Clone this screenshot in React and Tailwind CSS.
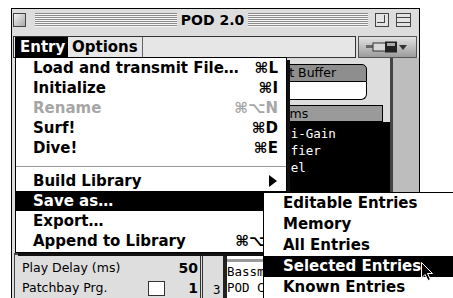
function MenuRow({ label, keys, disabled, active, arrow }) {
  return (
    <div
      className={`flex h-5 items-center pl-[17px] pr-[8px] ${
        active ? 'bg-black text-white' : disabled ? 'text-[#a6a6a6]' : 'text-black'
      }`}
    >
      <span className="flex-1 whitespace-nowrap">{label}</span>
      {keys && <span className="whitespace-nowrap">{keys}</span>}
      {arrow && (
        <svg width="8" height="12" viewBox="0 0 8 12" className="mr-[1px]">
          <polygon points="0,0 8,6 0,12" fill="black" />
        </svg>
      )}
    </div>
  )
}

function SubRow({ label, active }) {
  return (
    <div className={`flex h-[21px] items-center pl-[19px] whitespace-nowrap ${active ? 'bg-black text-white' : 'text-black'}`}>
      {label}
    </div>
  )
}

const stripes =
  'bg-[repeating-linear-gradient(to_bottom,#8c8c8c_0px,#8c8c8c_1px,#f6f6f6_1px,#f6f6f6_2px)]'

export default function App() {
  return (
    <div className="relative w-[453px] h-[298px] overflow-hidden bg-white font-['DejaVu_Sans',sans-serif]">
      {/* window */}
      <div className="ml-[11px] mt-[8px] w-[409px] h-[300px] border border-black bg-[#dddddd] flex flex-col">
        {/* title bar */}
        <div className="flex h-[22px] items-center pl-[1px]">
          <div className="w-[13px] h-[14px] border border-[#444] bg-[linear-gradient(135deg,#f2f2f2,#a8a8a8)]" />
          <div className={`ml-[9px] w-[142px] h-[14px] ${stripes}`} />
          <div className="w-[71px] text-center text-[14px] font-bold leading-none text-black">POD 2.0</div>
          <div className={`w-[120px] h-[14px] ${stripes}`} />
          <div className="ml-[7px] w-[14px] h-[14px] border border-[#444] bg-[#e4e4e4] p-[1px]">
            <div className="w-[8px] h-[8px] border-r border-b border-[#444]" />
          </div>
          <div className="ml-[7px] w-[15px] h-[14px] border border-[#444] bg-[#e4e4e4] flex flex-col justify-evenly">
            <div className="h-px bg-[#444]" />
            <div className="h-px bg-[#444]" />
          </div>
        </div>
        <div className="h-[5px]" />

        {/* menu bar */}
        <div className="flex h-[22px] pl-[1px]">
          <div className="flex w-[343px] border border-[#333] bg-[#e6e6e6] text-[15px] font-bold leading-[20px]">
            <div className="ml-[1px] w-[53px] bg-black pl-[5px] text-white">Entry</div>
            <div className="w-[75px] border-r border-[#666] pl-[4px] text-black">Options</div>
          </div>
          <div className="ml-[2px] w-[59px] border border-[#555] bg-[linear-gradient(to_bottom,#e2e2e2,#9c9c9c)] flex items-center justify-center">
            <svg width="44" height="12" viewBox="0 0 44 12">
              <rect x="0" y="4" width="8" height="3" fill="#666" />
              <rect x="7" y="2" width="13" height="8" fill="#d8d8d8" stroke="#333" />
              <rect x="19" y="0.5" width="12" height="11" fill="#222" />
              <rect x="21" y="2" width="8" height="3" fill="#aaa" />
              <polygon points="33,4 41,4 37,9" fill="#333" />
            </svg>
          </div>
        </div>

        {/* content */}
        <div className="flex h-[240px]">
          {/* left column */}
          <div className="w-[191px] flex flex-col border-r-[3px] border-double border-[#333] pl-[2px]">
            <div className="h-[199px]" />
            <div className="flex-1 border-t-2 border-l border-[#444] bg-[#dedede] pl-[7px] pr-[2px] pt-[3px] text-[12.5px] text-black">
              <div className="flex h-5 items-center">
                <span className="flex-1">Play Delay (ms)</span>
                <span className="font-bold text-[14px]">50</span>
              </div>
              <div className="flex h-5 items-center">
                <span className="flex-1">Patchbay Prg.</span>
                <span className="w-[17px] h-[15px] border border-[#333] bg-white" />
                <span className="ml-[23px] font-bold text-[14px]">1</span>
              </div>
            </div>
          </div>

          {/* middle column */}
          <div className="w-[187px] flex flex-col pt-[6px]">
            <div className="ml-[36px] w-[128px] h-[18px] rounded-t-[5px] border border-black bg-[#8e8e8e] text-center text-[12.5px] leading-[16px] text-black">
              Edit Buffer
            </div>
            <div className="ml-[36px] w-[128px] h-[18px] rounded-br-[6px] border border-t-0 border-black bg-white" />
            <div className="ml-[36px] mt-[5px] w-[144px] h-[17px] border border-black bg-[#9a9a9a] pl-[9px] text-[12.5px] leading-[15px] text-black">
              Programs
            </div>
            <div className="ml-[36px] w-[151px] h-[136px] bg-black pt-[3px] pl-[14px] font-['DejaVu_Sans_Mono',monospace] text-[12.5px] leading-[17px] text-white whitespace-pre">
              <div>Big Hi-Gain</div>
              <div>Amplifier</div>
              <div>Channel</div>
              <div>Clean</div>
            </div>
            <div className="flex flex-1 font-['DejaVu_Sans_Mono',monospace] text-[12.5px] text-black">
              <div className="w-[20px] border-t border-black pl-[10px] pt-[24px] leading-[16px]">
                <div className="mt-[2px]">3</div>
              </div>
              <div className="w-[4px] bg-[#222]" />
              <div className="flex-1 bg-white">
                <div className="mt-[4px] h-[3px] bg-[#9a9a9a]" />
                <div className="mt-[2px] h-[16px] leading-[16px]">Bassman</div>
                <div className="h-[16px] leading-[16px]">POD Clean</div>
              </div>
            </div>
          </div>

          {/* scroll column */}
          <div className="w-[29px] border-l-[3px] border-[#444] bg-[#bdbdbd]" />
        </div>
      </div>

      {/* Entry menu */}
      <div className="absolute left-[15px] top-[57px] w-[272px] border border-black bg-white pb-[1px] shadow-[3px_3px_0_#111] text-[15px] font-bold">
        <MenuRow label="Load and transmit File…" keys="⌘L" />
        <MenuRow label="Initialize" keys="⌘I" />
        <MenuRow label="Rename" keys="⌘⌥N" disabled />
        <MenuRow label="Surf!" keys="⌘D" />
        <MenuRow label="Dive!" keys="⌘E" />
        <div className="h-[13px] pt-[8px]">
          <div className="h-px bg-[#9a9a9a]" />
        </div>
        <MenuRow label="Build Library" arrow />
        <MenuRow label="Save as…" active />
        <MenuRow label="Export…" />
        <MenuRow label="Append to Library" keys="⌘⌥A" />
      </div>

      {/* Save as submenu */}
      <div className="absolute left-[263px] top-[192px] w-[200px] border border-black bg-white text-[15px] font-bold">
        <SubRow label="Editable Entries" />
        <SubRow label="Memory" />
        <SubRow label="All Entries" />
        <SubRow label="Selected Entries" active />
        <SubRow label="Known Entries" />
      </div>

      {/* mouse pointer */}
      <svg width="13" height="20" viewBox="0 0 13 20" className="absolute left-[421px] top-[262px]">
        <polygon points="0.5,0.5 0.5,16 4,12.5 7,18.5 9.5,17.5 6.5,11.5 11.5,11.5" fill="black" stroke="white" strokeWidth="1" />
      </svg>
    </div>
  )
}
